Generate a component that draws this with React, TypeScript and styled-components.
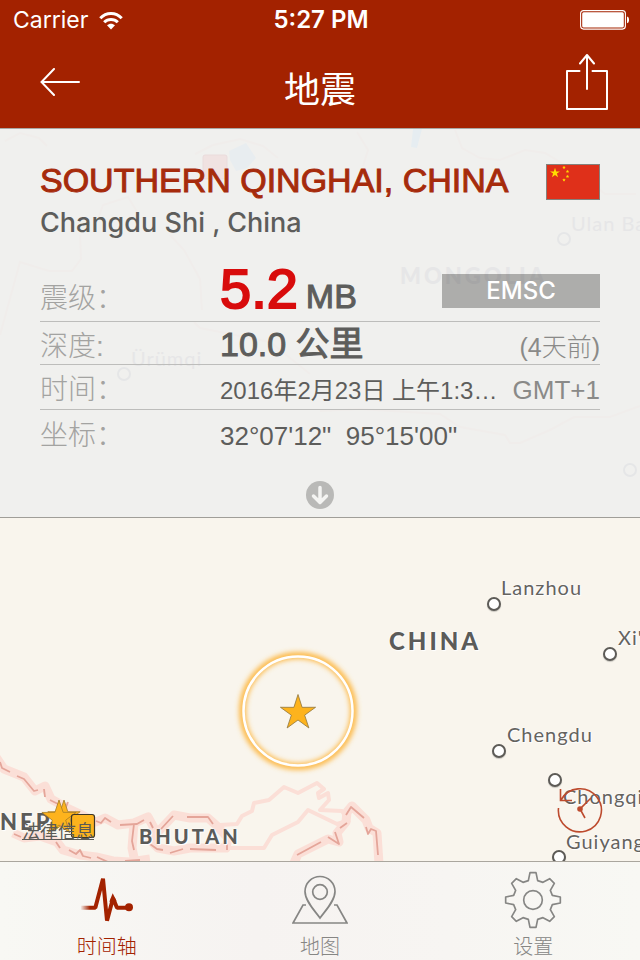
import React from "react";
import styled, { createGlobalStyle, css } from "styled-components";

const sans = `"Liberation Sans", "Noto Sans CJK SC", sans-serif`;
const mediumSans = `Inter, "Noto Sans CJK SC", sans-serif`;
const mapFont = `Lato, "Noto Sans CJK SC", sans-serif`;

const GlobalStyle = createGlobalStyle`
  *, *::before, *::after { box-sizing: border-box; }
  body { margin: 0; font-family: ${sans}; background: #f9f5ed; color: #5d5d5b; }
  button { font: inherit; color: inherit; border: 0; padding: 0; background: none; cursor: pointer; }
  svg { display: block; }
`;

const Screen = styled.div`
  min-height: 100vh;
  display: flex;
  flex-direction: column;
`;

const Header = styled.header`
  background: #a32200;
  color: #fff;
`;

const StatusBar = styled.div`
  display: grid;
  grid-template-columns: 1fr auto 1fr;
  align-items: center;
  height: 40px;
  padding: 0 11px 0 13px;
  font-family: ${mediumSans};
  font-size: 23px;
  line-height: 40px;
`;

const Carrier = styled.div`
  display: flex;
  align-items: center;
  gap: 11px;
`;

const Clock = styled.time`
  font-size: 24px;
  font-weight: 600;
`;

const BatterySlot = styled.div`
  justify-self: end;
`;

const NavBar = styled.nav`
  display: grid;
  grid-template-columns: 1fr auto 1fr;
  height: 88px;
  padding: 0 31px;
`;

const NavTitle = styled.h1`
  margin: 0;
  font-size: 36px;
  font-weight: 400;
  line-height: 102px;
`;

const NavButton = styled.button<{ $end?: boolean }>`
  justify-self: ${(p) => (p.$end ? "end" : "start")};
  align-self: start;
  padding: ${(p) => (p.$end ? "14px 0 0" : "28px 0 0 9px")};
`;

const Panel = styled.section`
  position: relative;
  overflow: hidden;
  padding: 31px 40px 8px;
  border-top: 1px solid #aaa8a4;
  border-bottom: 1px solid #a09e98;
  background: #f0f0ee;
`;

const Backdrop = styled.div`
  position: absolute;
  inset: 0;
  overflow: hidden;
`;

const PanelBody = styled.div`
  position: relative;
`;

const TitleRow = styled.div`
  display: flex;
  align-items: center;
  justify-content: space-between;
  height: 44px;
`;

const Title = styled.h2`
  align-self: flex-start;
  margin: 0;
  font-size: 34px;
  font-weight: 400;
  line-height: 40px;
  color: #a62b0c;
  -webkit-text-stroke: 1px #a62b0c;
  white-space: nowrap;
`;

const Place = styled.p`
  margin: 0;
  font-family: ${mediumSans};
  font-size: 27px;
  font-weight: 500;
  line-height: 38px;
`;

const Details = styled.dl`
  margin: 0;
`;

const Row = styled.div<{ $height: number; $top: number; $last?: boolean }>`
  display: flex;
  align-items: baseline;
  min-height: ${(p) => p.$height}px;
  padding-top: ${(p) => p.$top}px;
  border-bottom: ${(p) => (p.$last ? "0" : "1px solid #bdbdbb")};
  line-height: 34px;
`;

const Label = styled.dt`
  flex: 0 0 180px;
  font-size: 28px;
  font-weight: 300;
  color: #a3a3a1;
`;

const Value = styled.dd<{ $size: number; $strong?: boolean }>`
  flex: 1 1 auto;
  min-width: 0;
  margin: 0;
  font-size: ${(p) => p.$size}px;
  white-space: pre;
  ${(p) => p.$strong && css`-webkit-text-stroke: 1px #5d5d5b;`}
`;

const Magnitude = styled.strong`
  margin-right: 8px;
  font-size: 56px;
  font-weight: 400;
  line-height: 56px;
  color: #d80c0c;
  -webkit-text-stroke: 2px #d80c0c;
`;

const Side = styled.dd<{ $size: number }>`
  margin: 0;
  font-size: ${(p) => p.$size}px;
  font-weight: 300;
  color: #8a8a88;
`;

const Badge = styled.dd`
  align-self: flex-end;
  width: 158px;
  margin: 0 0 13px;
  background: rgba(0, 0, 0, 0.28);
  color: #fff;
  font-family: ${mediumSans};
  font-size: 24px;
  font-weight: 500;
  line-height: 34px;
  text-align: center;
`;

const Expand = styled.button`
  display: block;
  margin: 26px auto 0;
`;

const MapArea = styled.section`
  position: relative;
  flex: 1 0 343px;
  overflow: hidden;
  background: #f9f5ed;
`;

const Layer = styled.div`
  position: absolute;
  inset: 0;
`;

const CityDot = styled.span<{ $x: number; $y: number; $faint?: boolean }>`
  position: absolute;
  left: ${(p) => p.$x - 7}px;
  top: ${(p) => p.$y - 7}px;
  width: 14px;
  height: 14px;
  border: 2px solid ${(p) => (p.$faint ? "#e5e6e7" : "#5d5b57")};
  border-radius: 50%;
  background: ${(p) => (p.$faint ? "transparent" : "#fff")};
  box-shadow: ${(p) => (p.$faint ? "none" : "0 1px 1px rgba(0, 0, 0, 0.2)")};
`;

const MapLabel = styled.span<{ $x: number; $y: number; $faint?: boolean }>`
  position: absolute;
  left: ${(p) => p.$x}px;
  top: ${(p) => p.$y}px;
  font-family: ${mapFont};
  font-size: 20px;
  line-height: 24px;
  letter-spacing: 1px;
  color: ${(p) => (p.$faint ? "#e6e6e7" : "#65635f")};
  white-space: nowrap;
  text-shadow: ${(p) => (p.$faint ? "none" : "0 0 2px #fff, 0 0 2px #fff, 1px 1px 1px #fff")};
`;

const CountryLabel = styled(MapLabel)<{ $size: number }>`
  font-size: ${(p) => p.$size}px;
  font-weight: 900;
  letter-spacing: 3px;
  color: ${(p) => (p.$faint ? "#e6e6e7" : "#5b5b59")};
`;

const Legal = styled.a`
  position: absolute;
  left: 22px;
  bottom: 17px;
  font-size: 18px;
  line-height: 24px;
  color: #5b5a56;
`;

const Recent = styled.button`
  position: absolute;
  right: 37px;
  bottom: 28px;
`;

const TabBar = styled.nav`
  display: grid;
  grid-template-columns: repeat(3, 1fr);
  height: 99px;
  border-top: 1px solid #aaa69e;
  background: linear-gradient(90deg, #f8f8f4, #f6f3f1 40%, #f7f5f2 70%, #f8f8f4);
`;

const Tab = styled.button<{ $active?: boolean }>`
  display: flex;
  flex-direction: column;
  align-items: center;
  justify-content: flex-end;
  color: ${(p) => (p.$active ? "#a32200" : "#868684")};
  font-size: 20px;
  font-weight: 300;
  line-height: 26px;
`;

const TabIcon = styled.span`
  display: flex;
  align-items: center;
  height: 56px;
  margin-bottom: 6px;
`;

function starPoints(cx: number, cy: number, outer: number, inner: number) {
  return Array.from({ length: 10 }, (_, i) => {
    const r = i % 2 ? inner : outer;
    const a = (Math.PI / 5) * i - Math.PI / 2;
    return `${(cx + r * Math.cos(a)).toFixed(2)},${(cy + r * Math.sin(a)).toFixed(2)}`;
  }).join(" ");
}

const Wifi = () => (
  <svg width="24" height="19" viewBox="0 0 24 19" fill="none" stroke="#fff" strokeWidth="3" aria-hidden="true">
    <path d="M1.3 7.2C7.2 .8 16.8 .8 22.7 7.2" />
    <path d="M5.2 11.3C9 7.5 15 7.5 18.8 11.3" />
    <path d="M12 18.5L8 14.3C10.3 12.2 13.7 12.2 16 14.3Z" fill="#fff" stroke="none" />
  </svg>
);

const Battery = () => (
  <svg width="49" height="20" viewBox="0 0 49 20" aria-hidden="true">
    <rect x=".6" y=".6" width="44.8" height="18.5" rx="3" fill="none" stroke="#fff" strokeWidth="1.1" />
    <rect x="2.2" y="2.2" width="41.6" height="15.3" rx="1.5" fill="#fff" />
    <path d="M47 6.5q2.2 .5 2 3.4q.2 2.8-2 3.4z" fill="#fff" />
  </svg>
);

const BackArrow = () => (
  <svg width="40" height="28" viewBox="0 0 40 28" fill="none" stroke="#fff" strokeWidth="2" strokeLinecap="round" aria-hidden="true">
    <path d="M39 14H1.5M14 1L1.5 14L14 27" />
  </svg>
);

const ShareIcon = () => (
  <svg width="44" height="57" viewBox="0 0 44 57" fill="none" stroke="#fff" strokeWidth="2" strokeLinecap="round" strokeLinejoin="round" aria-hidden="true">
    <path d="M14.5 17H2V55H42V17H27.5M22 35V1.5M15 9.5L22 1L29 9.5" />
  </svg>
);

const Flag = () => (
  <svg width="54" height="36" viewBox="0 0 54 36" role="img" aria-label="China">
    <rect x=".5" y=".5" width="53" height="35" fill="#df301a" stroke="#85817c" />
    <g fill="#ffde00">
      <polygon points={starPoints(9, 9, 5.2, 2)} />
      <polygon points={starPoints(18, 3.5, 1.8, 0.8)} />
      <polygon points={starPoints(21.5, 7.5, 1.8, 0.8)} />
      <polygon points={starPoints(21.5, 12.5, 1.8, 0.8)} />
      <polygon points={starPoints(18, 16, 1.8, 0.8)} />
    </g>
  </svg>
);

const DownArrow = () => (
  <svg width="28" height="28" viewBox="0 0 28 28" aria-hidden="true">
    <circle cx="14" cy="14" r="14" fill="#b9b9b7" />
    <path d="M14 6.5V21M7.5 15L14 21.5L20.5 15" fill="none" stroke="#f4f4f2" strokeWidth="3.5" strokeLinecap="round" strokeLinejoin="round" />
  </svg>
);

const FaintTerrain = () => (
  <svg width="640" height="389" viewBox="0 129 640 389" fill="none" stroke="#f0edeb" strokeWidth="2" aria-hidden="true">
    <rect x="203" y="155" width="24" height="24" rx="2" fill="#f0e2e1" stroke="#eadcdc" strokeWidth="1" />
    <path d="M229 151L246 143L250 149L256 158L247 168L236 171L230 160Z" fill="#e8edf0" stroke="none" />
    <path d="M413 129H422L417 148L411 147Z" fill="#e6edf1" stroke="none" />
    <path d="M5 141L20 133L39 138L47 146M195 154L213 145L240 139L263 146L278 158M96 225L103 205L128 197L139 215M80 235L81 259L72 271L49 271L20 262L0 335M170 235L184 250L200 279L202 310" />
    <path d="M357 132L368 150L363 166M455 130L462 148L480 158L500 160L525 150L545 153L565 165L575 168L590 182L605 194L636 194M194 322L200 328L230 334L270 342L310 374M320 411L360 409L440 414L460 427L505 435L510 443L520 443L550 430L574 417L610 417L640 406" />
  </svg>
);

const Terrain = () => (
  <svg width="640" height="343" viewBox="0 518 640 343" fill="none" strokeLinejoin="round" aria-hidden="true">
    <defs>
      <filter id="glow" x="-30%" y="-30%" width="160%" height="160%">
        <feGaussianBlur stdDeviation="2.8" />
      </filter>
    </defs>
    <g stroke="#fbdfd7" strokeWidth="9">
      <path d="M-4 757L4 769L24 777L35 791L45 786L51 799L67 808L80 814L96 822L105 818L118 825L134 823L148 817L154 828L151 841L158 848L174 851L190 848L226 848L228 838L217 826L208 818L190 818L174 815L157 833" />
      <path d="M13 833L24 838L40 836L57 842L63 850L80 855L96 857L113 861L130 862L150 859M134 823L132 848L135 862" />
      <path d="M294 863L298 854L328 839L339 842L337 833L346 822L347 812L352 806L366 820L369 828L377 833L379 864" />
    </g>
    <g stroke="#fbdfd7" strokeWidth="4">
      <path d="M220 825L237 824L242 816L252 811L254 803L269 800L284 787L298 793L317 783L324 789L318 793L319 798L328 793L329 800L320 810L342 811L347 819" />
      <path d="M226 848H264L272 835L298 822L308 810L337 824L350 820" />
    </g>
    <g stroke="#e4a599" strokeWidth="1.8">
      <path d="M0 762L2 768L10 772M17 776L24 779L34 791L38 790M44 789L45 797M50 800L58 804M64 812L68 802M96 821L101 823L105 818L111 822M120 825L137 824L144 820M134 824L132 841L134 850M150 822L153 828M150 844L157 849L163 850M170 853L183 849M187 817H208L213 824M161 829L173 816M190 849L216 850M227 844V850M14 834L21 837M56 842L60 848M69 850L76 854L80 850L83 856L91 858M97 857L108 862M125 861L140 860" />
      <path d="M297 855L321 842M328 837L339 844L335 832M340 828L347 823M346 815L351 807L364 818M366 827L368 834L371 829L376 831L378 855" />
    </g>
    <circle cx="298" cy="711" r="55.5" stroke="#fdba4a" strokeWidth="7" filter="url(#glow)" />
    <circle cx="298" cy="711" r="54.5" stroke="#fff" strokeWidth="2.5" />
    <polygon points={starPoints(298, 713, 18.5, 7)} fill="#fdb31d" stroke="#8f763f" strokeWidth=".8" />
  </svg>
);

const Quakes = () => (
  <svg width="120" height="343" viewBox="0 518 120 343" aria-hidden="true">
    <g fill="#fdb31d" stroke="#a57c27" strokeWidth=".8">
      <polygon points={starPoints(64, 817, 17, 6.5)} />
      <polygon points={starPoints(59, 818, 18, 7)} />
      <rect x="71.5" y="814.5" width="23" height="23" rx="2.5" stroke="#3c3527" strokeWidth="1.2" />
    </g>
  </svg>
);

const RecentIcon = () => (
  <svg width="46" height="46" viewBox="557 788 46 46" fill="none" stroke="#bd4b2e" strokeWidth="1.6" aria-hidden="true">
    <path d="M558.5 809A21.5 21.5 0 1 0 561 801M560.5 790V801.5H572M591 799L580 810L585 819" />
    <circle cx="580" cy="810" r="2" fill="#bd4b2e" />
  </svg>
);

const PulseIcon = () => (
  <svg width="54" height="46" viewBox="240 52 162 138" fill="none" aria-hidden="true">
    <defs>
      <linearGradient id="fade" gradientUnits="userSpaceOnUse" x1="241" y1="0" x2="270" y2="0">
        <stop offset="0" stopColor="#a32200" stopOpacity="0" />
        <stop offset="1" stopColor="#a32200" />
      </linearGradient>
    </defs>
    <path d="M242 144H286L309 57L321 183L339 116L351 144H388" stroke="url(#fade)" strokeWidth="12" strokeLinejoin="bevel" />
    <path d="M328 126L338 101L350 125Z" fill="#a32200" />
    <circle cx="387" cy="143" r="12" fill="#a32200" />
  </svg>
);

const PinIcon = () => (
  <svg width="56" height="50" viewBox="292 875 56 50" fill="none" stroke="currentColor" strokeWidth="1.7" aria-hidden="true">
    <path d="M320 918C315 911 305 901 305 891.5A15 15 0 0 1 335 891.5C335 901 325 911 320 918Z" />
    <circle cx="320" cy="892" r="7.3" />
    <path d="M306 905H303L293 923H347L337 905H334" />
  </svg>
);

const GearIcon = () => (
  <svg width="58" height="58" viewBox="549 33 174 174" fill="none" stroke="currentColor" strokeWidth="5" strokeLinejoin="round" aria-hidden="true">
    <path d="M627 38H645L650 62L666 67L686 56L700 70L688 91L694 106L718 111V129L694 134L688 149L700 170L686 184L666 173L650 178L645 202H627L622 178L606 173L586 184L572 170L584 149L578 134L554 129V111L578 106L584 91L572 70L586 56L606 67L622 62Z" />
    <circle cx="636" cy="120" r="28" />
  </svg>
);

export default function App() {
  return (
    <Screen>
      <GlobalStyle />
      <Header>
        <StatusBar>
          <Carrier>
            Carrier <Wifi />
          </Carrier>
          <Clock>5:27 PM</Clock>
          <BatterySlot>
            <Battery />
          </BatterySlot>
        </StatusBar>
        <NavBar>
          <NavButton aria-label="返回">
            <BackArrow />
          </NavButton>
          <NavTitle>地震</NavTitle>
          <NavButton $end aria-label="分享">
            <ShareIcon />
          </NavButton>
        </NavBar>
      </Header>

      <Panel>
        <Backdrop aria-hidden="true">
          <FaintTerrain />
          <CityDot $x={564} $y={110} $faint />
          <MapLabel $x={571} $y={82} $faint>Ulan Bator</MapLabel>
          <CountryLabel $x={400} $y={135} $size={22} $faint>MONGOLIA</CountryLabel>
          <CityDot $x={124} $y={245} $faint />
          <MapLabel $x={131} $y={217} $faint>Ürümqi</MapLabel>
          <CityDot $x={630} $y={341} $faint />
        </Backdrop>
        <PanelBody>
          <TitleRow>
            <Title>SOUTHERN QINGHAI, CHINA</Title>
            <Flag />
          </TitleRow>
          <Place>Changdu Shi , China</Place>
          <Details>
            <Row $height={80} $top={19}>
              <Label>震级：</Label>
              <Value $size={34} $strong>
                <Magnitude>5.2</Magnitude>MB
              </Value>
              <Badge>EMSC</Badge>
            </Row>
            <Row $height={43} $top={5}>
              <Label>深度:</Label>
              <Value $size={34} $strong>10.0 公里</Value>
              <Side $size={25}>(4天前)</Side>
            </Row>
            <Row $height={45} $top={8}>
              <Label>时间：</Label>
              <Value $size={24}>2016年2月23日 上午1:3…</Value>
              <Side $size={26}>GMT+1</Side>
            </Row>
            <Row $height={45} $top={9} $last>
              <Label>坐标：</Label>
              <Value $size={26}>{`32°07'12"  95°15'00"`}</Value>
            </Row>
          </Details>
          <Expand aria-label="展开">
            <DownArrow />
          </Expand>
        </PanelBody>
      </Panel>

      <MapArea aria-label="地图">
        <Layer>
          <Terrain />
        </Layer>
        <Layer>
          <CityDot $x={494} $y={86} />
          <MapLabel $x={501} $y={57}>Lanzhou</MapLabel>
          <CountryLabel $x={389} $y={111} $size={24}>CHINA</CountryLabel>
          <CityDot $x={610} $y={136} />
          <MapLabel $x={618} $y={107}>Xi'an</MapLabel>
          <CityDot $x={499} $y={233} />
          <MapLabel $x={507} $y={204}>Chengdu</MapLabel>
          <CityDot $x={555} $y={262} />
          <MapLabel $x={563} $y={266}>Chongqing</MapLabel>
          <CityDot $x={559} $y={339} />
          <MapLabel $x={566} $y={311}>Guiyang</MapLabel>
          <CountryLabel $x={0} $y={292} $size={22}>NEPAL</CountryLabel>
          <CountryLabel $x={139} $y={306} $size={20}>BHUTAN</CountryLabel>
        </Layer>
        <Layer>
          <Quakes />
        </Layer>
        <Legal href="#legal">法律信息</Legal>
        <Recent aria-label="最近">
          <RecentIcon />
        </Recent>
      </MapArea>

      <TabBar>
        <Tab $active>
          <TabIcon>
            <PulseIcon />
          </TabIcon>
          时间轴
        </Tab>
        <Tab>
          <TabIcon>
            <PinIcon />
          </TabIcon>
          地图
        </Tab>
        <Tab>
          <TabIcon>
            <GearIcon />
          </TabIcon>
          设置
        </Tab>
      </TabBar>
    </Screen>
  );
}
